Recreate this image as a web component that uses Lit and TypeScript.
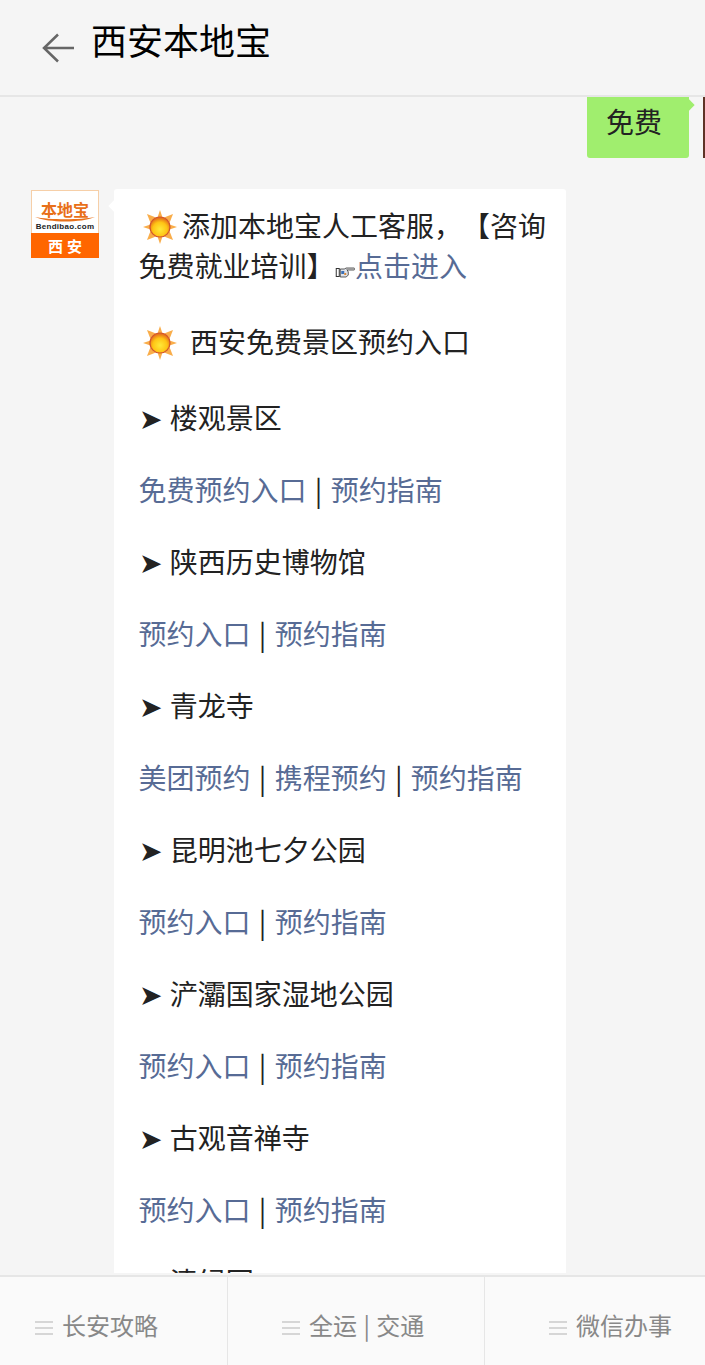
import { LitElement, css, html, nothing, type TemplateResult } from "lit";
import { customElement } from "lit/decorators.js";

const guides: { name: string; links: string[] }[] = [
  { name: "楼观景区", links: ["免费预约入口", "预约指南"] },
  { name: "陕西历史博物馆", links: ["预约入口", "预约指南"] },
  { name: "青龙寺", links: ["美团预约", "携程预约", "预约指南"] },
  { name: "昆明池七夕公园", links: ["预约入口", "预约指南"] },
  { name: "浐灞国家湿地公园", links: ["预约入口", "预约指南"] },
  { name: "古观音禅寺", links: ["预约入口", "预约指南"] },
  { name: "清绿园", links: [] },
];

const sun = html`<svg class="sun" viewBox="0 0 34 34" aria-hidden="true">
  <defs>
    <radialGradient id="disc" cx="50%" cy="62%" r="55%">
      <stop offset="0%" stop-color="#ffe93a" />
      <stop offset="65%" stop-color="#ffc414" />
      <stop offset="100%" stop-color="#e8791a" />
    </radialGradient>
  </defs>
  <g fill="#f9ad4a">
    <path d="M17 0l3 9h-6z" />
    <path d="M17 34l-3-9h6z" />
    <path d="M0 17l9-3v6z" />
    <path d="M34 17l-9 3v-6z" />
    <path d="M4 4l9 3.500-5.500 5.500z" />
    <path d="M30 4l-3.500 9-5.500-5.500z" />
    <path d="M4 30l3.500-9 5.500 5.500z" />
    <path d="M30 30l-9-3.500 5.500-5.500z" />
  </g>
  <circle cx="17" cy="17" r="10" fill="url(#disc)" stroke="#d2552a" stroke-width="1.2" />
</svg>`;

// tiny pointing hand picture in front of the link
const hand = html`<svg class="hand" viewBox="0 0 20 12" aria-hidden="true">
  <rect x="1" y="2.500" width="3" height="8" fill="#fff" stroke="#333" />
  <path d="M5 3h4l2-1h8v2h-7l1 2v3l-2 2H5z" fill="#dfe3ea" stroke="#333" stroke-width=".8" />
  <path d="M11 2h8v2h-8z" fill="#999" />
  <path d="M6 5h3v3H6z" fill="#3a6fb5" />
  <path d="M9 7h2v2H9z" fill="#d98a3a" />
</svg>`;

@customElement("app-root")
export class AppRoot extends LitElement {
  private renderGuide(guide: { name: string; links: string[] }): TemplateResult {
    return html`<p>➤ ${guide.name}</p>
      ${guide.links.length
        ? html`<p>
            ${guide.links.map(
              (link, i) =>
                html`${i > 0 ? " | " : nothing}<a href="#">${link}</a>`,
            )}
          </p>`
        : nothing}`;
  }

  render(): TemplateResult {
    return html`<header>
        <svg class="back" viewBox="0 0 32 30" aria-hidden="true">
          <path d="M16 1.500 2 15l14 13.500M2 15h30" />
        </svg>
        <h1>西安本地宝</h1>
      </header>

      <main>
        <div class="sent">
          <div class="sent-bubble">免费</div>
          <div class="sent-avatar"></div>
        </div>

        <div class="received">
          <div class="logo">
            <div class="logo-top">
              <span class="logo-name">本地宝</span>
              <svg class="swoosh" viewBox="0 0 60 5" aria-hidden="true">
                <path d="M0 0c14 3 46 3 60 0C46 6 14 6 0 0z" />
              </svg>
              <span class="logo-url">Bendibao.com</span>
            </div>
            <div class="logo-city">西安</div>
          </div>

          <div class="bubble">
            <div class="intro">
              ${sun}<span>添加本地宝人工客服，【咨询免费就业培训】</span>${hand}<a href="#">点击进入</a>
            </div>
            <p class="heading">${sun}<span>西安免费景区预约入口</span></p>
            ${guides.map((guide) => this.renderGuide(guide))}
          </div>
        </div>
      </main>

      <footer>
        ${["长安攻略", "全运 | 交通", "微信办事"].map(
          (label) => html`<div class="tab">
            <span class="lines"></span>
            <span class="label">${label}</span>
          </div>`,
        )}
      </footer>`;
  }

  static styles = css`
    :host {
      display: flex;
      flex-direction: column;
      height: 1365px;
      overflow: hidden;
      background: #f5f5f5;
      color: #222;
      font-family: "Noto Sans CJK SC", "Liberation Sans", sans-serif;
      font-size: 28px;
      line-height: 40px;
      word-spacing: 2px;
      text-spacing-trim: space-all;
    }

    header {
      display: flex;
      align-items: flex-start;
      flex: none;
      height: 95px;
      border-bottom: 2px solid #e6e6e6;
    }

    .back {
      width: 32px;
      height: 30px;
      margin: 33px 0 0 42px;
      flex: none;
      fill: none;
      stroke: #666;
      stroke-width: 2.5;
    }

    h1 {
      margin: 15px 0 0 17px;
      font-size: 36px;
      font-weight: 400;
      line-height: 48px;
      color: #000;
    }

    main {
      flex: 1;
      min-height: 0;
      overflow: hidden;
      margin-bottom: 2px;
    }

    .sent {
      display: flex;
      justify-content: flex-end;
      align-items: flex-end;
      height: 61px;
      overflow: hidden;
    }

    .sent-bubble {
      position: relative;
      box-sizing: border-box;
      width: 102px;
      height: 80px;
      margin-right: 14px;
      padding: 23px 0 0 19px;
      background: #a0ee6e;
      border-radius: 3px;
    }

    .sent-bubble::after {
      content: "";
      position: absolute;
      top: 23px;
      right: -4px;
      width: 8px;
      height: 8px;
      background: #a0ee6e;
      transform: rotate(45deg);
    }

    .sent-avatar {
      width: 2px;
      height: 61px;
      background: #5e3326;
    }

    .received {
      display: flex;
      align-items: flex-start;
      gap: 15px;
      margin-top: 31px;
      padding-left: 31px;
    }

    .logo {
      flex: none;
      width: 68px;
      height: 68px;
      margin-top: 1px;
      display: flex;
      flex-direction: column;
      background: #fff;
    }

    .logo-top {
      box-sizing: border-box;
      height: 43px;
      border: 1px solid #f6cfa8;
      border-bottom: none;
      display: flex;
      flex-direction: column;
      align-items: center;
      padding-top: 10px;
    }

    .logo-name {
      font-size: 16px;
      line-height: 16px;
      font-weight: 700;
      color: #e8701a;
    }

    .swoosh {
      flex: none;
      width: 62px;
      height: 5px;
      margin-top: 0;
      fill: #e8701a;
    }

    .logo-url {
      font-family: "Liberation Sans", sans-serif;
      font-size: 8px;
      font-weight: 700;
      line-height: 9px;
      color: #222;
      letter-spacing: 0.3px;
      word-spacing: 0;
    }

    .logo-city {
      flex: 1;
      background: #ff6600;
      color: #fff;
      font-size: 15px;
      font-weight: 700;
      line-height: 25px;
      letter-spacing: 4px;
      padding-left: 4px;
      text-align: center;
    }

    .bubble {
      position: relative;
      box-sizing: border-box;
      width: 452px;
      padding: 16px 19px 32px 24.5px;
      background: #fff;
      border-radius: 3px;
    }

    .bubble::before {
      content: "";
      position: absolute;
      top: 13px;
      left: -4px;
      width: 8px;
      height: 8px;
      background: #fff;
      transform: rotate(45deg);
    }

    p {
      margin: 32px 0 0;
    }

    a {
      color: #576b95;
      text-decoration: none;
    }

    .sun {
      width: 34px;
      height: 34px;
      margin-block: -6px;
      vertical-align: -1px;
    }

    .intro .sun {
      margin-left: 4.500px;
      margin-right: 5px;
    }

    .heading {
      line-height: 48px;
    }

    .heading .sun {
      margin-left: 4.500px;
      margin-right: 13px;
    }

    .hand {
      width: 20.500px;
      height: 12px;
      vertical-align: -1px;
    }

    footer {
      flex: none;
      height: 88px;
      display: grid;
      grid-template-columns: 228px 257px 1fr;
      background: #fafafa;
      border-top: 2px solid #e6e6e6;
      color: #888;
      font-size: 24px;
      word-spacing: 1px;
    }

    .tab {
      display: flex;
      align-items: center;
      gap: 9px;
      padding-left: 35px;
      border-right: 1px solid #e6e6e6;
    }

    .tab:nth-child(2) {
      padding-left: 54px;
    }

    .tab:nth-child(3) {
      padding-left: 64px;
      border-right: none;
    }

    .label {
      margin-top: 8px;
    }

    .lines {
      width: 18px;
      height: 14px;
      margin-top: 13px;
      background: repeating-linear-gradient(
        #d6d6d6 0 2.5px,
        transparent 2.5px 6px
      );
    }
  `;
}

declare global {
  interface HTMLElementTagNameMap {
    "app-root": AppRoot;
  }
}
